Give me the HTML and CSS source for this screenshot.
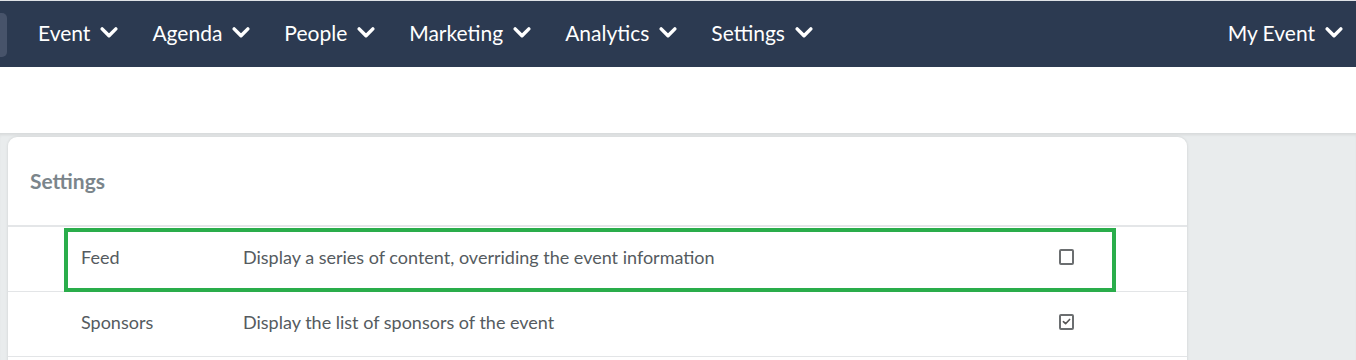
FILE: index.html
```html
<!DOCTYPE html>
<html>
<head>
<meta charset="utf-8">
<link rel="stylesheet" href="styles.css">
</head>
<body>
<nav class="topbar">
  <div class="stub"></div>
  <ul class="menu">
    <li class="item">Event <svg class="chev" viewBox="0 0 16 16"><path d="M2.5 5.5 8 11l5.5-5.5" /></svg></li>
    <li class="item">Agenda <svg class="chev" viewBox="0 0 16 16"><path d="M2.5 5.5 8 11l5.5-5.5" /></svg></li>
    <li class="item">People <svg class="chev" viewBox="0 0 16 16"><path d="M2.5 5.5 8 11l5.5-5.5" /></svg></li>
    <li class="item">Marketing <svg class="chev" viewBox="0 0 16 16"><path d="M2.5 5.5 8 11l5.5-5.5" /></svg></li>
    <li class="item">Analytics <svg class="chev" viewBox="0 0 16 16"><path d="M2.5 5.5 8 11l5.5-5.5" /></svg></li>
    <li class="item">Settings <svg class="chev" viewBox="0 0 16 16"><path d="M2.5 5.5 8 11l5.5-5.5" /></svg></li>
  </ul>
  <div class="item right">My Event <svg class="chev" viewBox="0 0 16 16"><path d="M2.5 5.5 8 11l5.5-5.5" /></svg></div>
</nav>
<div class="band"></div>
<main class="content">
  <section class="card">
    <header class="card-head">Settings</header>
    <div class="row">
      <div class="name">Feed</div>
      <div class="desc">Display a series of content, overriding the event information</div>
      <span class="box"></span>
      <div class="highlight"></div>
    </div>
    <div class="row">
      <div class="name">Sponsors</div>
      <div class="desc">Display the list of sponsors of the event</div>
      <span class="box checked"><svg viewBox="0 0 12 12"><path d="M2.6 6.2 5 8.4 9.4 3.8"/></svg></span>
    </div>
  </section>
</main>
</body>
</html>
```
FILE: styles.css
```css
* { box-sizing: border-box; }
html, body { margin: 0; padding: 0; }
body {
  font-family: Lato, "Open Sans", "Liberation Sans", sans-serif;
  background: #e9eced;
  height: 360px;
  overflow: hidden;
}
.topbar {
  height: 67px;
  background: #2c3a51;
  border-top: 1px solid #dfe2e6;
  display: flex;
  align-items: center;
  padding-bottom: 4px;
  color: #fff;
}
.stub {
  width: 7px;
  height: 44px;
  margin-top: 6px;
  background: #47536a;
  border-radius: 0 5px 5px 0;
}
.menu {
  list-style: none;
  margin: 0 0 0 31px;
  padding: 0;
  display: flex;
  gap: 33px;
  flex: 1;
}
.item {
  font-size: 21px;
  display: flex;
  align-items: center;
  gap: 9px;
  white-space: nowrap;
}
.right { margin-right: 12px; }
.chev {
  width: 20px;
  height: 20px;
  fill: none;
  stroke: #fff;
  stroke-width: 2.8;
  stroke-linecap: round;
  stroke-linejoin: round;
}
.band {
  height: 66px;
  background: #fff;
}
.content {
  padding: 4px 169px 0 8px;
  box-shadow: inset 0 3px 3px -1px rgba(0,0,0,0.08);
}
.card {
  background: #fff;
  border-radius: 9px 9px 0 0;
  box-shadow: 0 0 3px rgba(0,0,0,0.12);
  height: 240px;
}
.card-head {
  height: 90px;
  padding: 0 22px 2px;
  display: flex;
  align-items: center;
  font-size: 21px;
  font-weight: bold;
  color: #7b858b;
  border-bottom: 2px solid #e4e6e8;
}
.row {
  position: relative;
  height: 65px;
  border-bottom: 1px solid #e3e5e7;
  display: grid;
  grid-template-columns: 162px 1fr 15px;
  align-items: center;
  padding: 0 113px 4px 73px;
  font-size: 18px;
  color: #555b60;
}
.box {
  width: 15px;
  height: 16px;
  border: 2px solid #6b6e70;
  border-radius: 2px;
  display: block;
}
.box svg {
  display: block;
  width: 11px;
  height: 11px;
  fill: none;
  stroke: #555;
  stroke-width: 1.8;
  stroke-linecap: round;
  stroke-linejoin: round;
}
.highlight {
  position: absolute;
  left: 56px;
  top: 1px;
  width: 1052px;
  height: 64px;
  border: 4px solid #2aad4b;
  pointer-events: none;
}
```
